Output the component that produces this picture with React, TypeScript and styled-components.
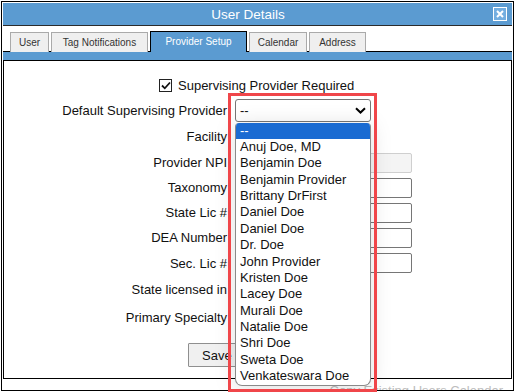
import React from "react";
import styled, { createGlobalStyle } from "styled-components";

const GlobalStyle = createGlobalStyle`
  html, body {
    margin: 0;
    padding: 0;
    background: #fff;
  }
  body {
    font-family: "Liberation Sans", Arial, sans-serif;
    color: #111;
  }
`;

const BLUE = "#5b9bd1";

const Page = styled.div`
  position: relative;
  width: 515px;
  height: 392px;
  overflow: hidden;
`;

const Frame = styled.div`
  box-sizing: border-box;
  margin: 1px 0 0 1px;
  width: 513px;
  height: 390px;
  border: 1px solid #000;
  padding: 1px;
  overflow: hidden;
  display: flex;
  flex-direction: column;

  & > * {
    flex-shrink: 0;
  }
`;

const TitleBar = styled.div`
  height: 22px;
  background: ${BLUE};
  border-bottom: 1px solid #2b2b2b;
  display: flex;
  align-items: center;
`;

const Title = styled.div`
  flex: 1;
  text-align: center;
  color: #fff;
  font-size: 13.5px;
`;

const CloseButton = styled.div`
  box-sizing: border-box;
  width: 14px;
  height: 14px;
  margin-right: 5px;
  border: 1px solid #fff;
  background: #74aee0;
  display: flex;
  align-items: center;
  justify-content: center;
`;

const TabBar = styled.div`
  height: 26px;
  box-sizing: border-box;
  padding-left: 7px;
  display: flex;
  align-items: flex-end;
  gap: 2px;
  background: linear-gradient(#000, #000) bottom / 100% 1px no-repeat, #fff;
`;

const Tab = styled.div<{ $w: number; $active?: boolean }>`
  box-sizing: border-box;
  width: ${(p) => p.$w}px;
  height: ${(p) => (p.$active ? 21 : 20)}px;
  border: 1px solid ${(p) => (p.$active ? "#000" : "#aaa")};
  border-bottom: none;
  background: ${(p) => (p.$active ? BLUE : "#efefef")};
  color: ${(p) => (p.$active ? "#fff" : "#333")};
  font-size: 10px;
  display: flex;
  align-items: center;
  justify-content: center;
  padding-bottom: ${(p) => (p.$active ? 1 : 0)}px;
`;

const BlueStrip = styled.div`
  height: 8px;
  background: ${BLUE};
`;

const Panel = styled.div`
  box-sizing: border-box;
  height: 319px;
  border: 1px solid #000;
`;

const CheckRow = styled.div`
  margin-top: 17px;
  height: 15px;
  padding-left: 155px;
  display: flex;
  align-items: center;
  gap: 6px;
  font-size: 13px;
`;

const CheckBox = styled.span`
  box-sizing: border-box;
  width: 13px;
  height: 13px;
  border: 1px solid #222;
  background: #fff;
  display: flex;
  align-items: center;
  justify-content: center;
`;

const Form = styled.div`
  margin-top: 4px;
  display: grid;
  grid-template-columns: 223px 1fr;
  grid-template-rows: 26px 27px 25px 25px 25px 25px 26px 27px 28px;
  column-gap: 8px;
  font-size: 13px;
`;

const Label = styled.div`
  align-self: center;
  text-align: right;
  color: #111;
`;

const Cell = styled.div`
  display: flex;
  align-items: center;
`;

const SelectWrap = styled.div`
  position: relative;
  width: 136px;
  height: 23px;
`;

const SelectBox = styled.div`
  box-sizing: border-box;
  width: 136px;
  height: 23px;
  border: 1px solid #767676;
  border-radius: 3px;
  background: #fff;
  display: flex;
  align-items: center;
  justify-content: space-between;
  padding: 0 4px 0 4px;
  font-size: 13px;
`;

const TextInput = styled.input<{ $disabled?: boolean }>`
  box-sizing: border-box;
  width: 177px;
  height: 20px;
  border: 1px solid ${(p) => (p.$disabled ? "#cfcfcf" : "#767676")};
  border-radius: 2px;
  background: ${(p) => (p.$disabled ? "#f4f4f4" : "#fff")};
  margin: 0;
  padding: 0 4px;
  font: inherit;
`;

const Popup = styled.div`
  position: absolute;
  top: 24px;
  left: 0;
  width: 136px;
  box-sizing: border-box;
  border: 1px solid #8a8a8a;
  border-top: none;
  border-radius: 4px 4px 7px 7px;
  background: #fff;
  overflow: hidden;
  box-shadow: 0 2px 22px rgba(0, 0, 0, 0.13);
  z-index: 5;
`;

const Option = styled.div<{ $selected?: boolean }>`
  height: 16.375px;
  line-height: 16.375px;
  padding-left: 4px;
  font-size: 13px;
  white-space: nowrap;
  background: ${(p) => (p.$selected ? "#1a6bd2" : "transparent")};
  color: ${(p) => (p.$selected ? "#fff" : "#111")};
`;

const ButtonRow = styled.div`
  margin-top: 12px;
  padding-left: 184px;
  display: flex;
`;

const Button = styled.button`
  box-sizing: border-box;
  height: 24px;
  width: 60px;
  padding: 0 0 0 13px;
  text-align: left;
  border: 1px solid #8f8f8f;
  border-radius: 1px;
  background: #f0f0f0;
  font-family: "Liberation Sans", Arial, sans-serif;
  font-size: 13px;
  color: #111;
`;

const Footer = styled.div`
  display: flex;
  justify-content: flex-end;
  padding: 4px 9px 0 0;
  font-size: 13px;
  line-height: 15px;
  color: #bdbdbd;
`;

const Callout = styled.div`
  position: absolute;
  left: 228px;
  top: 93px;
  width: 149px;
  height: 299px;
  box-sizing: border-box;
  border: 3px solid #f0464a;
  z-index: 10;
`;

const providers = [
  "--",
  "Anuj Doe, MD",
  "Benjamin Doe",
  "Benjamin Provider",
  "Brittany DrFirst",
  "Daniel Doe",
  "Daniel Doe",
  "Dr. Doe",
  "John Provider",
  "Kristen Doe",
  "Lacey Doe",
  "Murali Doe",
  "Natalie Doe",
  "Shri Doe",
  "Sweta Doe",
  "Venkateswara Doe",
];

const tabs = [
  { name: "User", w: 39 },
  { name: "Tag Notifications", w: 97 },
  { name: "Provider Setup", w: 97, active: true },
  { name: "Calendar", w: 58 },
  { name: "Address", w: 57 },
];

const Chevron = () => (
  <svg width="11" height="7" viewBox="0 0 11 7">
    <path d="M1 1.2 L5.5 5.5 L10 1.2" fill="none" stroke="#000" strokeWidth="2" />
  </svg>
);

// hidden selects sit under the open list, so they carry no text
const Select: React.FC<{ open?: boolean; value?: string }> = ({ open, value }) => (
  <SelectWrap>
    <SelectBox>
      <span>{value}</span>
      <Chevron />
    </SelectBox>
    {open && (
      <Popup>
        {providers.map((p, i) => (
          <Option key={i} $selected={i === 0}>
            {p}
          </Option>
        ))}
      </Popup>
    )}
  </SelectWrap>
);

const App: React.FC = () => {
  return (
    <Page>
      <GlobalStyle />
      <Frame>
        <TitleBar>
          <Title>User Details</Title>
          <CloseButton>
            <svg width="8" height="8" viewBox="0 0 8 8">
              <path d="M1 1 L7 7 M7 1 L1 7" stroke="#fff" strokeWidth="2" />
            </svg>
          </CloseButton>
        </TitleBar>

        <TabBar>
          {tabs.map((t) => (
            <Tab key={t.name} $w={t.w} $active={t.active}>
              {t.name}
            </Tab>
          ))}
        </TabBar>
        <BlueStrip />

        <Panel>
          <CheckRow>
            <CheckBox>
              <svg width="10" height="9" viewBox="0 0 10 9">
                <path d="M1 4.5 L3.8 7.3 L9 1.5" fill="none" stroke="#111" strokeWidth="1.8" />
              </svg>
            </CheckBox>
            <span>Supervising Provider Required</span>
          </CheckRow>

          <Form>
            <Label>Default Supervising Provider</Label>
            <Cell>
              <Select open value="--" />
            </Cell>

            <Label>Facility</Label>
            <Cell>
              <Select />
            </Cell>

            <Label>Provider NPI</Label>
            <Cell>
              <TextInput $disabled disabled />
            </Cell>

            <Label>Taxonomy</Label>
            <Cell>
              <TextInput />
            </Cell>

            <Label>State Lic #</Label>
            <Cell>
              <TextInput />
            </Cell>

            <Label>DEA Number</Label>
            <Cell>
              <TextInput />
            </Cell>

            <Label>Sec. Lic #</Label>
            <Cell>
              <TextInput />
            </Cell>

            <Label>State licensed in</Label>
            <Cell>
              <Select />
            </Cell>

            <Label>Primary Specialty</Label>
            <Cell>
              <Select />
            </Cell>
          </Form>

          <ButtonRow>
            <Button>Save</Button>
          </ButtonRow>
        </Panel>

        <Footer>Copy Existing Users Calendar</Footer>
      </Frame>
      <Callout />
    </Page>
  );
};

export default App;
